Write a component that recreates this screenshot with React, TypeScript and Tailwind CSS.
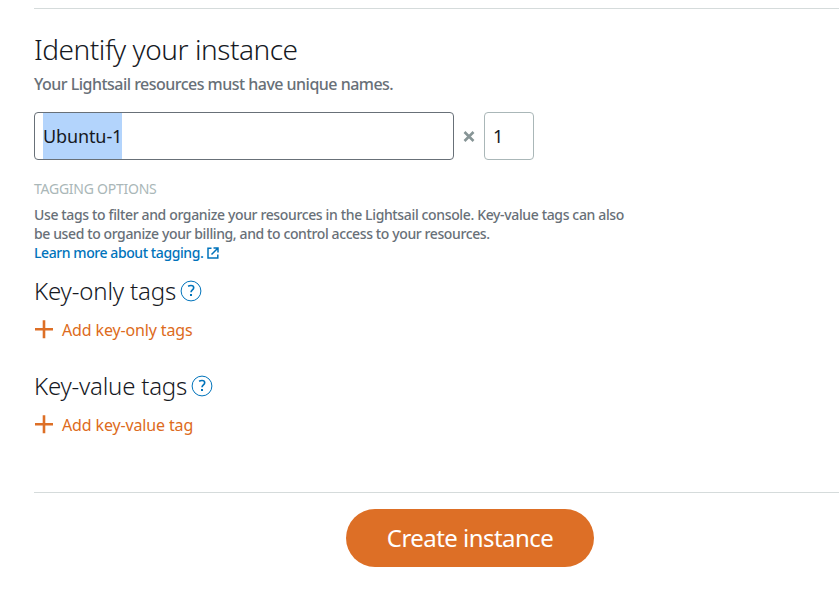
import React from "react";

function HelpIcon() {
  return (
    <svg width="22" height="22" viewBox="0 0 22 22" fill="none" stroke="#0073bb">
      <circle cx="11" cy="11" r="9.9" strokeWidth="1" />
      <path d="M8.100 6.200C9 5.700 10 5.500 11 5.500c1.800 0 2.700.9 2.700 2.200 0 2.100-2.700 2.300-2.700 4.600" strokeWidth="1.600" />
      <path d="M11 14v2" strokeWidth="2" />
    </svg>
  );
}

function ExternalIcon() {
  return (
    <svg width="12" height="12" viewBox="0 0 12 12" fill="none" stroke="#0073bb" strokeWidth="1.500">
      <path d="M4.500 1.300H1V11h9.800V7.500" />
      <path d="M6.500 1H11v4.500M11 1L4.500 7.500" />
    </svg>
  );
}

function TagSection({ title, action, titleClass }: { title: string; action: string; titleClass: string }) {
  return (
    <section className="h-[95px]">
      <div className="flex h-8 items-center gap-1">
        <h3 className={`w-fit whitespace-nowrap text-[24px] font-light leading-8 text-[#16191f] ${titleClass}`}>{title}</h3>
        <HelpIcon />
      </div>
      <button className="mt-[11px] flex h-6 items-center text-[#dd6b20]">
        <svg width="20" height="20" viewBox="0 0 20 20" stroke="#dd6f26" strokeWidth="2.600">
          <path d="M1 9.300h18M10 .3v18" />
        </svg>
        <span className="ml-2 whitespace-nowrap text-[16px] leading-6 tracking-[-0.14px]">{action}</span>
      </button>
    </section>
  );
}

export default function App() {
  return (
    <main className="h-[601px] overflow-hidden bg-white pl-[34px] pt-2 font-['Noto_Sans','Open_Sans',sans-serif]">
      <div className="h-[485px] border-y border-[#d5dbdb]">
        <h2 className="mt-[20px] h-10 whitespace-nowrap text-[28px] font-light leading-10 tracking-[-0.46px] text-[#16191f]">Identify your instance</h2>
        <p className="mt-[3px] h-6 whitespace-nowrap text-[16px] font-medium leading-6 tracking-[-0.52px] text-[#687078]">Your Lightsail resources must have unique names.</p>
        <div className="mt-[16px] flex h-12 items-center">
          <div className="flex h-12 w-[420px] items-center rounded border border-[#687078] pl-2">
            <span className="flex h-[46px] w-[79px] items-center whitespace-nowrap bg-[#b3d4fc] text-[18px] tracking-[-0.12px] text-[#16191f]">Ubuntu-1</span>
          </div>
          <svg className="ml-[9px] mr-[9px]" width="12" height="12" viewBox="0 0 12 12" stroke="#879596" strokeWidth="2.600">
            <path d="M1.500 2l9 9M10.500 2l-9 9" />
          </svg>
          <div className="flex h-12 w-[50px] items-center rounded border border-[#aab7b8] pl-2 text-[18px] text-[#16191f]">1</div>
        </div>
        <h4 className="mt-[19px] h-5 whitespace-nowrap text-[14px] leading-5 tracking-[-0.25px] text-[#aab7b8]">TAGGING OPTIONS</h4>
        <div className="mt-[6px] whitespace-nowrap text-[14px] font-medium leading-[19px] text-[#687078]">
          <p className="tracking-[-0.36px]">Use tags to filter and organize your resources in the Lightsail console. Key-value tags can also</p>
          <p className="tracking-[-0.39px]">be used to organize your billing, and to control access to your resources.</p>
          <a className="flex items-center gap-1 tracking-[-0.42px] text-[#0073bb]">Learn more about tagging.<ExternalIcon /></a>
        </div>
        <div className="mt-[13px]">
          <TagSection title="Key-only tags" action="Add key-only tags" titleClass="tracking-[-0.16px]" />
          <TagSection title="Key-value tags" action="Add key-value tag" titleClass="tracking-[-0.22px]" />
        </div>
      </div>
      <button className="ml-[312px] mt-4 flex h-[58px] w-[248px] items-center justify-center whitespace-nowrap rounded-full bg-[#dd6f26] text-[24px] tracking-[-0.54px] text-white">Create instance</button>
    </main>
  );
}
